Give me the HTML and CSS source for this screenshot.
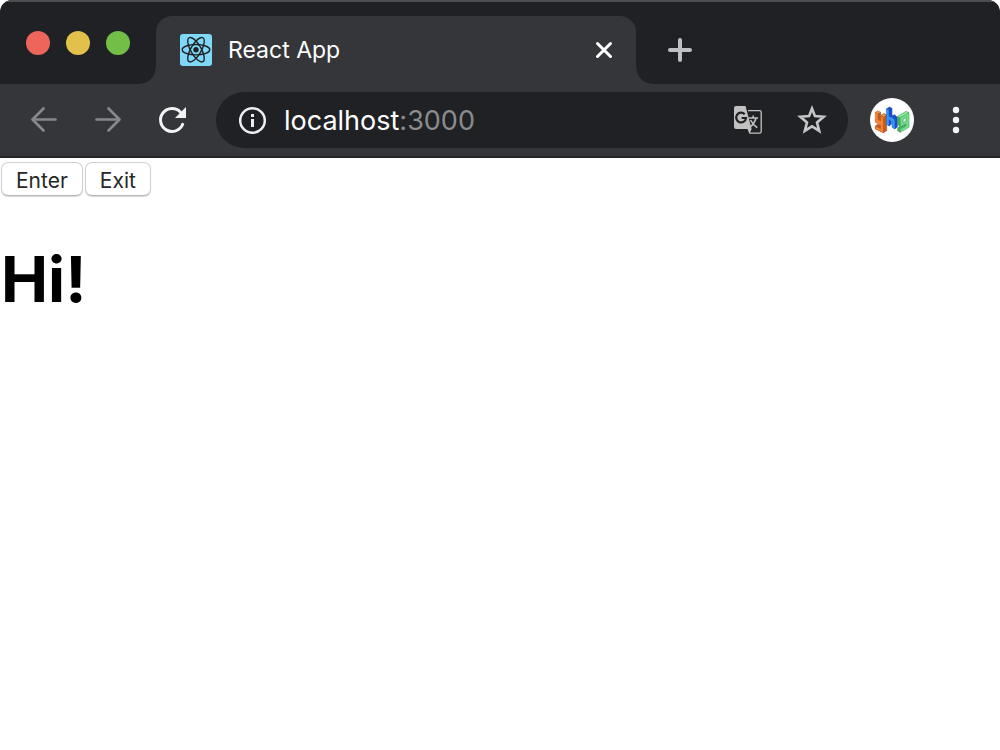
FILE: index.html
```html
<!DOCTYPE html>
<html lang="en">
<head>
<meta charset="utf-8">
<title>React App</title>
<link rel="stylesheet" href="styles.css">
</head>
<body>
<div class="window">
  <header class="chrome">
    <div class="tab-strip">
      <div class="lights">
        <button class="light light-close" aria-label="Close window"></button>
        <button class="light light-min" aria-label="Minimize"></button>
        <button class="light light-max" aria-label="Zoom"></button>
      </div>
      <span class="flare flare-left"></span>
      <div class="tab">
        <svg class="favicon" viewBox="0 0 32 32" aria-hidden="true">
          <rect width="32" height="32" rx="3" fill="#80d8f9"/>
          <g fill="none" stroke="#202124" stroke-width="1.400">
            <ellipse cx="16" cy="15.700" rx="13.800" ry="5.200"/>
            <ellipse cx="16" cy="15.700" rx="13.800" ry="5.200" transform="rotate(60 16 15.700)"/>
            <ellipse cx="16" cy="15.700" rx="13.800" ry="5.200" transform="rotate(120 16 15.700)"/>
          </g>
          <circle cx="16" cy="15.700" r="2.700" fill="#202124"/>
        </svg>
        <span class="tab-title">React App</span>
        <button class="icon-button tab-close" aria-label="Close tab">
          <svg width="24" height="24" viewBox="0 0 24 24"><path d="M5.500 5.500 18.500 18.500M18.500 5.500 5.500 18.500" stroke="#fff" stroke-width="3" stroke-linecap="round"/></svg>
        </button>
      </div>
      <span class="flare flare-right"></span>
      <button class="icon-button new-tab" aria-label="New tab">
        <svg width="24" height="24" viewBox="0 0 24 24"><path d="M12 2V22M2 12H22" stroke="#bdc1c6" stroke-width="4" stroke-linecap="round"/></svg>
      </button>
    </div>
    <div class="toolbar">
      <nav class="nav">
        <button class="icon-button nav-button" aria-label="Back">
          <svg width="32" height="32" viewBox="0 0 32 32" fill="none" stroke="#87888a" stroke-width="2.700" stroke-linecap="round" stroke-linejoin="round"><path d="M27.500 15.500H4.500M15.500 4.500 4.500 15.500 15.500 26.500"/></svg>
        </button>
        <button class="icon-button nav-button" aria-label="Forward">
          <svg width="32" height="32" viewBox="0 0 32 32" fill="none" stroke="#87888a" stroke-width="2.700" stroke-linecap="round" stroke-linejoin="round"><path d="M4.500 15.500H27.500M16.500 4.500 27.500 15.500 16.500 26.500"/></svg>
        </button>
        <button class="icon-button nav-button" aria-label="Reload">
          <svg width="32" height="32" viewBox="0 0 32 32"><path d="M26.700 20.300A11.500 11.500 0 1 1 24.500 8.200" fill="none" stroke="#f1f3f4" stroke-width="3" stroke-linecap="round"/><path d="M30 3V14H19Z" fill="#f1f3f4"/></svg>
        </button>
      </nav>
      <div class="omnibox">
        <svg class="info" width="28" height="28" viewBox="0 0 28 28" aria-hidden="true"><circle cx="14.500" cy="14.500" r="12.300" fill="none" stroke="#eceef0" stroke-width="2.500"/><path d="M13 8H16V11H13ZM13 13H16V21H13Z" fill="#eceef0"/></svg>
        <div class="url"><span>localhost</span><span class="port">:3000</span></div>
        <button class="icon-button box-button" aria-label="Translate this page">
          <svg width="28" height="28" viewBox="0 0 28 28">
            <path d="M14 4.700H25.500Q27.200 4.700 27.200 6.500V25.400Q27.200 27.200 25.500 27.200H15.500" fill="none" stroke="#c1c1c1" stroke-width="1.300"/>
            <path d="M2 0H11.500L17.600 23 15.500 28 13.500 23H2Q0 23 0 21V2Q0 0 2 0Z" fill="#c1c1c1"/>
            <path d="M10.700 8.200A4.900 4.900 0 1 0 12 12H7.600" fill="none" stroke="#202124" stroke-width="2.200"/>
            <path d="M14.500 12H24M19.200 9.500V12M22 12Q20.500 18 15.500 21.500M16.500 14Q19 19 23.300 21.700" fill="none" stroke="#c1c1c1" stroke-width="1.600"/>
          </svg>
        </button>
        <button class="icon-button box-button" aria-label="Bookmark this page">
          <svg width="32" height="32" viewBox="0 0 32 32"><path d="M16 4.500 18.900 12 27.700 12.700 21 18.400 23.200 26.900 16 22.300 8.800 26.900 11 18.400 4.300 12.700 13.100 12Z" fill="none" stroke="#c5c6c8" stroke-width="2.600"/></svg>
        </button>
      </div>
      <button class="icon-button avatar" aria-label="Profile">
        <svg width="44" height="44" viewBox="30 39 132 132">
          <g stroke-width="1.500" stroke-linejoin="round">
            <path d="M54 86 62 82V92L71 86 80 90V137L70 143 46 131V123L54 118 60 121 62 108 54 104Z" fill="#c4591f" stroke="#8e4a24"/>
            <path d="M46 82 54 77 62 82 54 86Z" fill="#f59a55" stroke="#b3582a"/>
            <path d="M62 92 71 86 80 90 70 96Z" fill="#f59a55" stroke="#b3582a"/>
            <path d="M46 82 54 86V104L62 108V92L70 96V143L46 131V123L62 131V120L46 112Z" fill="#fb8430" stroke="#b3582a"/>
            <path d="M79 72 88 66 96 70V92L104 89 112 97V126L104 132V104L87 97V76Z" fill="#1a50cf" stroke="#1b439f"/>
            <path d="M87 123 94 118V108L87 104Z" fill="#1a50cf" stroke="#1b439f"/>
            <path d="M79 72 87 76V95L96 97 104 104V132L96 127V108L87 104V123L79 118Z" fill="#3795f3" stroke="#1c60c9"/>
            <path d="M113 95 121 99V125L137 117V124L121 132V142L113 137V128L121 124 113 119Z" fill="#3fb75d" stroke="#368148"/>
            <path d="M121 98 147 83V127L121 142V133L138 123V116L121 125Z" fill="#72df8b" stroke="#3b9554"/>
            <path d="M129 103 139 97V108L129 114Z" fill="#cdeed4" stroke="#2e8a4a"/>
            <path d="M113 94 138 79 147 83 121 98Z" fill="#85ed98" stroke="#3b9554"/>
          </g>
        </svg>
      </button>
      <button class="icon-button nav-button menu" aria-label="Menu">
        <svg width="8" height="28" viewBox="0 0 8 28" fill="#f1f3f4"><circle cx="4" cy="4" r="3.200"/><circle cx="4" cy="14" r="3.200"/><circle cx="4" cy="24" r="3.200"/></svg>
      </button>
    </div>
  </header>
  <main class="page">
    <div class="actions">
      <button class="push">Enter</button>
      <button class="push">Exit</button>
    </div>
    <h1 class="greeting">Hi!</h1>
  </main>
</div>
</body>
</html>
```
FILE: styles.css
```css
* { box-sizing: border-box; }

body {
  margin: 0;
  background: #fff;
  font-family: Inter, "Liberation Sans", sans-serif;
}

button {
  margin: 0;
  padding: 0;
  border: 0;
  font-family: inherit;
}

svg { display: block; }

.window {
  min-height: 100vh;
  background: #fff;
}

.chrome {
  overflow: hidden;
  border-radius: 12px 12px 0 0;
  background: #202124;
}

.tab-strip {
  display: flex;
  align-items: flex-end;
  height: 84px;
  border-top: 2px solid #4b4d4f;
}

.lights {
  display: flex;
  gap: 16px;
  padding: 0 10px 29px 26px;
}

.light {
  width: 24px;
  height: 24px;
  border-radius: 50%;
}

.light-close { background: #ee655b; }
.light-min { background: #e1c04c; }
.light-max { background: #72be47; }

.flare {
  width: 16px;
  height: 16px;
}

.flare-left {
  margin-left: -4px;
  background: radial-gradient(circle at 0 0, transparent 15px, #35363a 16px);
}

.flare-right {
  background: radial-gradient(circle at 100% 0, transparent 15px, #35363a 16px);
}

.lights + .flare-left { margin-left: 0; }

.tab {
  display: flex;
  align-items: center;
  width: 48%;
  height: 68px;
  padding: 0 20px 0 24px;
  border-radius: 16px 16px 0 0;
  background: #35363a;
}

.favicon {
  width: 32px;
  height: 32px;
}

.tab-title {
  flex: 1;
  margin-left: 16px;
  color: #fff;
  font-size: 23px;
  line-height: 32px;
}

.icon-button {
  display: flex;
  align-items: center;
  justify-content: center;
  flex: none;
  background: transparent;
}

.new-tab {
  width: 56px;
  height: 68px;
}

.toolbar {
  display: flex;
  align-items: center;
  height: 74px;
  padding: 0 12px;
  border-bottom: 2px solid #242326;
  background: #35363a;
}

.nav {
  display: flex;
}

.nav-button {
  width: 64px;
  height: 56px;
}

.omnibox {
  display: flex;
  align-items: center;
  flex: 1;
  height: 56px;
  margin: 0 22px 0 12px;
  padding: 0 4px 0 22px;
  border-radius: 28px;
  background: #202124;
}

.url {
  flex: 1;
  margin-left: 18px;
  padding-top: 2px;
  color: #fff;
  font-size: 27px;
  line-height: 32px;
}

.port { color: #8b8c8e; }

.box-button {
  width: 64px;
  height: 56px;
}

.avatar {
  width: 44px;
  height: 44px;
  border-radius: 50%;
  background: #fff;
}

.menu { margin-left: 10px; }

.page { padding: 4px 1px; }

.actions {
  display: flex;
  gap: 2px;
}

.push {
  height: 34px;
  padding: 2px 14px 0;
  border: 1px solid #d0d0d0;
  border-bottom-color: #b8b8b8;
  border-radius: 7px;
  background: #fff;
  box-shadow: 0 1px 1px #d8d8d8;
  color: #272727;
  font-size: 21px;
  line-height: 32px;
}

.greeting {
  margin: 45px 0;
  color: #000;
  font-size: 63px;
  font-weight: 700;
  line-height: 76px;
}
```
